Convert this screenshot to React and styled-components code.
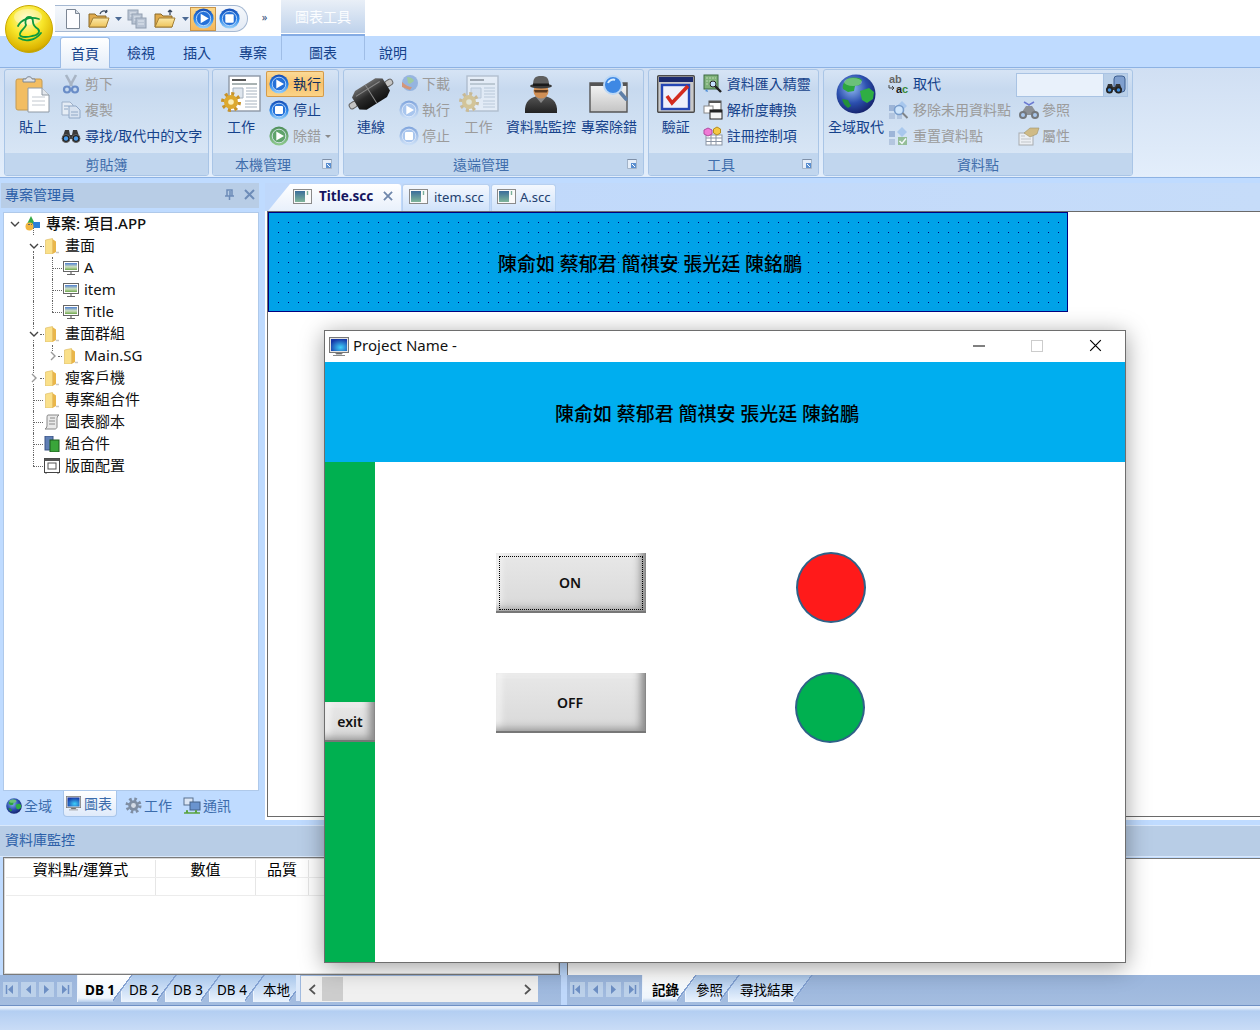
import React from 'react';
import styled, { createGlobalStyle } from 'styled-components';

const Global = createGlobalStyle`
  html, body { margin: 0; padding: 0; background: #fff; }
  * { box-sizing: border-box; }
  body { font-family: "Noto Sans", "Noto Sans CJK TC", sans-serif; }
  svg { display: block; flex: none; }
`;

const Page = styled.div`
  position: relative; width: 1260px; height: 1030px; overflow: hidden;
  display: flex; flex-direction: column; background: #bfdbff;
  font-size: 14px; color: #15428b; line-height: 18px; white-space: nowrap;
`;

/* ---- title ---- */
const TitleBar = styled.div`height: 36px; flex: none; background: #fff; display: flex; padding-left: 55px;`;
const OrbWrap = styled.div`position: absolute; left: 5px; top: 5px; z-index: 3;`;
const Qat = styled.div`
  height: 27px; width: 193px; margin-top: 5px; padding-left: 5px; display: flex; align-items: center;
  background: linear-gradient(#f5f8fc, #e3eaf4); border: 1px solid #a5b8d2; border-left: none; border-radius: 0 14px 14px 0;
`;
const QatSlot = styled.div`
  width: ${p => p.$w}px; height: 24px; display: flex; align-items: center; justify-content: center;
  ${p => p.$on && 'background: linear-gradient(#fbd98c,#f6b658); outline: 1px solid #c9954a; outline-offset: -1px;'}
`;
const QatMore = styled.div`width: 33px; text-align: center; color: #33507a; font-size: 11px; line-height: 34px;`;
const ContextTab = styled.div`
  width: 84px; height: 36px; text-align: center; line-height: 34px; color: #fbfdff;
  background: linear-gradient(#e9eff7, #bdd1eb); border-bottom: 2px solid #85ace4; box-shadow: inset 0 -1px 0 #fff;
`;

const TabStrip = styled.div`height: 31px; flex: none; display: flex; padding-left: 57px; background: #bfdbff; position: relative; z-index: 1;`;
const RibbonTab = styled.div`
  width: ${p => p.$w}px; height: ${p => p.$on ? 31 : 30}px; text-align: center; line-height: 34px; color: #15428b; position: relative;
  ${p => p.$on && `
    margin: 1px 3px 0; width: ${p.$w - 6}px; line-height: 32px; height: 31px;
    background: linear-gradient(#fff, #e3edf9); border: 1px solid #9cbce6; border-bottom: none; border-radius: 3px 3px 0 0;`}
  ${p => p.$ctx && 'border-left: 1px solid #9fbde6; border-right: 1px solid #9fbde6; height: 24px;'}
`;

/* ---- ribbon ---- */
const Ribbon = styled.div`
  height: 111px; flex: none; display: flex; gap: 3px; padding: 1px 0 0 4px;
  background: linear-gradient(#d0dff3, #e3eefb); border-top: 1px solid #8db2e3; border-bottom: 1px solid #8db2e3;
`;
const Group = styled.div`
  position: relative; width: ${p => p.$w}px; height: 107px; margin-right: ${p => p.$mr || 0}px;
  display: flex; flex-direction: column;
  border: 1px solid #a9c5e6; border-radius: 3px; overflow: hidden;
  background: linear-gradient(#d6e4f5, #c7d9ef 18%, #cddef1 40%, #dde9f7);
`;
const GroupBody = styled.div`flex: 1; display: flex; padding-top: 1px; margin-left: -1px;`;
const Caption = styled.div`
  height: 22px; flex: none; background: #c1d6ee; text-align: center; line-height: 24px; color: #3f6dab;
  padding-right: ${p => p.$launch ? 25 : 0}px;
`;
const Launcher = styled.div`position: absolute; right: 6px; bottom: 6px;`;
const Large = styled.div`
  width: ${p => p.$w}px; margin-left: ${p => p.$ml || 0}px; display: flex; flex-direction: column; align-items: center; padding-top: 4px;
  color: ${p => p.$off ? '#9b9b9b' : '#15428b'};
`;
const LargeIcon = styled.div`height: 38px; margin-bottom: 5px; display: flex; align-items: center; justify-content: center;`;
const Col = styled.div`width: ${p => p.$w}px; display: flex; flex-direction: column;`;
const Row = styled.div`
  height: 26px; display: flex; align-items: center; padding-left: ${p => p.$pl || 0}px; gap: ${p => p.$gap}px;
  color: ${p => p.$off ? '#9b9b9b' : '#15428b'};
  ${p => p.$on && 'background: linear-gradient(#fbdc9b, #f8c26c 50%, #fbd58a); box-shadow: inset 0 0 0 1px #d39a4b; border-radius: 2px; color: #10315f;'}
`;
const Ico = styled.div`width: ${p => p.$w}px; display: flex; justify-content: center;`;
const Combo = styled.div`height: 26px; padding: 2px 0 0; display: flex;`;
const ComboInput = styled.div`width: 87px; height: 24px; background: #e9f1fb; border: 1px solid #a9c3e3; border-right: none;`;
const ComboBtn = styled.div`width: 25px; height: 24px; background: #b9cfe8; border: 1px solid #a9c3e3; display: flex; align-items: center; justify-content: center;`;
const Drop = styled.span`width: 0; height: 0; border-left: 3px solid transparent; border-right: 3px solid transparent; border-top: 3px solid #8a8a8a;`;

/* ---- main ---- */
const Main = styled.div`height: 648px; flex: none; display: flex;`;
const Left = styled.div`width: 262px; flex: none; padding-top: 5px; padding-bottom: 6px; display: flex; flex-direction: column;`;
const PaneHead = styled.div`
  height: ${p => p.$h}px; flex: none; background: #b8cde6; color: #2c5fa8; display: flex; align-items: center; padding: 0 ${p => p.$pr || 0}px 2px 4px;
  margin: 0 ${p => p.$mr || 0}px 0 1px; justify-content: space-between;
  ${p => p.$band && 'margin: 0; padding-left: 5px; box-shadow: 0 -1px 0 #d9e8fb, 0 1px 0 #d9e8fb;'}
`;
const PaneBtns = styled.div`display: flex; gap: 9px; align-items: center;`;
const Tree = styled.div`flex: 1; margin: 4px 3px 0 3px; background: #fff; border: 1px solid #afc9ea; color: #111; font-size: 15px;`;
const TreeRow = styled.div`
  position: relative; height: 22px; display: flex; align-items: center; gap: 5px; padding-left: ${p => p.$pl}px;
  font-weight: ${p => p.$strong ? 500 : 400};
`;
const TreeLabel = styled.span`margin-top: -2px;`;
const GuideV = styled.span`
  position: absolute; left: ${p => p.$x}px; top: ${p => p.$top}px; bottom: ${p => p.$bottom}px;
  border-left: 1px dotted #666;
`;
const GuideH = styled.span`
  position: absolute; left: ${p => p.$x}px; top: 11px; width: ${p => p.$w}px; border-top: 1px dotted #666;
`;
const Caret = styled.span`position: absolute; left: ${p => p.$x}px; top: 6px; background: #fff;`;
const PaneTabs = styled.div`height: 29px; flex: none; display: flex; align-items: center; padding-left: 6px; color: #3c6cab;`;
const PaneTab = styled.div`
  width: ${p => p.$w}px; height: 25px; display: flex; align-items: center; gap: ${p => p.$gap || 2}px; padding-left: ${p => p.$pl || 0}px;
  ${p => p.$on && 'background: linear-gradient(#fff, #dfeafa); border: 1px solid #a9c6ea; border-top: none; border-radius: 0 0 4px 4px; margin-top: -3px; height: 26px;'}
`;

const Right = styled.div`flex: 1; display: flex; flex-direction: column; padding-top: 5px; padding-left: 3px; padding-bottom: 6px;`;
const DocTabs = styled.div`height: 28px; flex: none; display: flex; align-items: flex-end; padding-left: 3px; gap: 1px; background: linear-gradient(90deg, #bfd8fb, #c6dcf9);`;
const DocTab = styled.div`
  height: 27px; width: ${p => p.$w}px; display: flex; align-items: center; gap: ${p => p.$gap}px; padding: 0 0 3px ${p => p.$pl}px; font-size: 13px; color: #23406e;
  background: linear-gradient(#f4f8fe, #cfe2fa); border-radius: 3px 3px 0 0; border: 1px solid #b7d0f0; border-bottom: none;
  ${p => p.$on && `
    background: linear-gradient(#fff, #e8f0fb); border: none; font-weight: 700; font-size: 13.5px; color: #14145f;
    clip-path: polygon(0 100%, 22px 0, 100% 0, 100% 100%);`}
`;
const CloseX = styled.span`margin-left: 3px;`;
const DocFrame = styled.div`flex: 1; background: #fff; padding: 0 0 3px 2px;`;
const DocInner = styled.div`height: 100%; background: #fff; border: 1px solid #6a6a6a; border-right: none;`;
const TitleBand = styled.div`
  width: 800px; height: 100px; border: 1px solid #000080; display: flex; align-items: center; justify-content: center;
  padding: 5px 36px 0 0;
  background-color: #00a2e8;
  background-image: conic-gradient(at 1px 1px, transparent 75%, #000070 0);
  background-size: 10px 10px; background-position: 9px 9px;
`;
const Names = styled.div`
  font-family: "Liberation Serif", "Noto Sans CJK TC", serif; font-size: 19px; line-height: 24px; color: #000; font-weight: 500;
`;

/* ---- monitor ---- */
const Monitor = styled.div`height: 149px; flex: none; display: flex; flex-direction: column;`;
const MonBody = styled.div`flex: 1; display: flex; padding-top: 1px;`;
const GridFrame = styled.div`
  width: 557px; margin-left: 3px; background: #fff; border: 1px solid #7a7a7a; outline: 1px solid #d8d8d8; outline-offset: -2px; padding: 2px 2px; color: #000; font-size: 15px;
`;
const GridRow = styled.div`display: flex; height: 18px; border-bottom: 1px solid #ececec;`;
const GridCell = styled.div`width: ${p => p.$w}px; text-align: center; border-right: 1px solid #e6e6e6; line-height: 18px;`;
const Splitter = styled.div`width: 8px; flex: none;`;
const LogPane = styled.div`flex: 1; background: #fff; border-top: 1px solid #777; border-left: 1px solid #777; margin-top: 1px; margin-left: -1px;`;

/* ---- bottom ---- */
const BottomBar = styled.div`height: 30px; flex: none; display: flex; background: linear-gradient(#9ab5dc, #a4bde0); color: #000; font-size: 13.5px;`;
const NavGroup = styled.div`width: ${p => p.$w}px; flex: none; display: flex; align-items: center; gap: 3px; padding-left: 3px; height: 29px;`;
const NavBtn = styled.div`width: 15px; height: 15px; background: #bcd1ea; display: flex; align-items: center; justify-content: center;`;
const Sheets = styled.div`display: flex; width: ${p => p.$w}px; overflow: hidden; height: 27px;`;
const Sheet = styled.div`
  position: relative; z-index: ${p => p.$z};
  width: ${p => p.$w}px; height: 27px; margin-right: -12px; padding-left: ${p => p.$pl || 8}px; line-height: 30px; flex: none;
  background: linear-gradient(#a9c6ea, #cfe1f7 60%, #eaf3fd);
  box-shadow: inset 1px 0 0 #eef5fd;
  clip-path: polygon(0 0, 100% 0, calc(100% - 20px) 100%, 0 100%);
  ${p => p.$on && 'background: linear-gradient(#fff, #eef5fc 85%, #b5cdec); font-weight: 700;'}
  &::after {
    content: ""; position: absolute; right: 0; top: 0; width: 20px; height: 27px;
    background: linear-gradient(to bottom right, transparent calc(50% - 1.5px), #7f9ed0 calc(50% - 1.5px), #7f9ed0 50%, transparent 50%);
  }
`;
const SheetSep = styled.div`width: 4px; height: 26px; background: #dbe8fa; margin-right: 1px; flex: none;`;
const HScroll = styled.div`width: 237px; height: 26px; margin-top: 1px; background: #f0f0f0; display: flex; align-items: center; justify-content: space-between; padding: 0 6px 0 7px; flex: none; position: relative;`;
const Thumb = styled.div`position: absolute; left: 21px; top: 1px; width: 21px; height: 24px; background: #cdcdcd;`;
const BarFill = styled.div`width: ${p => p.$w}px; flex: none;`;
const BarSplit = styled.div`width: 6px; flex: none; background: #bfd8fb;`;
const Status = styled.div`
  height: 25px; flex: none; border-top: 1px solid #6f90c4;
  background: linear-gradient(#e4eefb, #e4eefb 2px, #b3cef2 5px, #c9dcf6);
`;

/* ---- window ---- */
const Win = styled.div`
  position: absolute; left: 324px; top: 330px; width: 802px; height: 633px; z-index: 5;
  background: #fff; border: 1px solid #6e6e6e; box-shadow: 0 4px 22px rgba(0,0,0,.38);
  display: flex; flex-direction: column;
`;
const WinTitle = styled.div`height: 31px; flex: none; display: flex; align-items: center; padding: 0 1px 0 4px; color: #111; font-size: 15px;`;
const WinName = styled.div`margin: -4px 0 0 4px; flex: 1;`;
const WinBtn = styled.div`width: 58px; display: flex; justify-content: center; margin-top: -2px;`;
const WinBand = styled.div`height: 100px; flex: none; background: #00aeef; display: flex; align-items: center; justify-content: center; padding: 5px 36px 0 0;`;
const WinBody = styled.div`flex: 1; display: flex;`;
const WinSide = styled.div`width: 50px; flex: none; background: #00b050; padding-top: 240px;`;
const Canvas = styled.div`flex: 1; position: relative; background: #fff;`;
const Bevel = styled.div`
  display: flex; align-items: center; justify-content: center; color: #111; font-weight: 600; font-size: 14px;
  background: linear-gradient(#e8e8e8, #d8d8d8);
  box-shadow: inset 0 -2px 0 #777, inset -1px 0 0 #888, inset 0 -9px 8px -5px #8f8f8f, inset -11px 0 9px -6px #858585, inset 9px 0 8px -6px #fff, inset 0 5px 5px -3px #f4f4f4;
  ${p => p.$focus && 'outline: 1px dotted #000; outline-offset: -4px;'}
`;
const CanvasBtn = styled(Bevel)`position: absolute; left: ${p => p.$x}px; top: ${p => p.$y}px; width: 150px; height: 60px; padding-right: 2px;`;
const ExitBtn = styled(Bevel)`width: 50px; height: 40px;`;
const Lamp = styled.div`
  position: absolute; left: ${p => p.$x}px; top: ${p => p.$y}px; width: 70px; height: 71px; border-radius: 50%;
  background: ${p => p.$c}; border: 2px solid #2f6188;
`;

/* ---- drawings ---- */
const Defs = () => (
  <svg width="0" height="0" style={{ position: 'absolute' }}>
    <defs>
      <radialGradient id="orb" cx="45%" cy="30%" r="75%"><stop offset="0" stopColor="#fffbc0" /><stop offset=".45" stopColor="#f8e62a" /><stop offset=".85" stopColor="#dcb400" /><stop offset="1" stopColor="#a88a00" /></radialGradient>
      <linearGradient id="rimB" x1="0" y1="0" x2="0" y2="1"><stop offset="0" stopColor="#164cb4" /><stop offset=".55" stopColor="#2a86ea" /><stop offset="1" stopColor="#9fd4fa" /></linearGradient>
      <linearGradient id="rimG" x1="0" y1="0" x2="0" y2="1"><stop offset="0" stopColor="#4e8f5a" /><stop offset="1" stopColor="#8fcb8f" /></linearGradient>
      <linearGradient id="rimL" x1="0" y1="0" x2="0" y2="1"><stop offset="0" stopColor="#7fa4dc" /><stop offset="1" stopColor="#cfe2f8" /></linearGradient>
      <linearGradient id="screen" x1="0" y1="0" x2="0" y2="1"><stop offset="0" stopColor="#4f7fd0" /><stop offset=".55" stopColor="#cfe0c0" /><stop offset="1" stopColor="#6fa84e" /></linearGradient>
      <radialGradient id="screenB" cx="60%" cy="70%" r="70%"><stop offset="0" stopColor="#3fd0fa" /><stop offset="1" stopColor="#1638a8" /></radialGradient>
      <linearGradient id="tabDoc" x1="0" y1="0" x2="0" y2="1"><stop offset="0" stopColor="#3b6d9a" /><stop offset="1" stopColor="#7fb59a" /></linearGradient>
      <linearGradient id="folderF" x1="0" y1="0" x2="0" y2="1"><stop offset="0" stopColor="#fbe9a8" /><stop offset="1" stopColor="#eec35a" /></linearGradient>
      <radialGradient id="globe" cx="40%" cy="35%" r="70%"><stop offset="0" stopColor="#8fb8ef" /><stop offset=".55" stopColor="#2b4fae" /><stop offset="1" stopColor="#141f66" /></radialGradient>
      <linearGradient id="winG" x1="0" y1="0" x2="0" y2="1"><stop offset="0" stopColor="#f7f7f7" /><stop offset="1" stopColor="#c4c4c4" /></linearGradient>
      <linearGradient id="plug" x1="0" y1="0" x2="0" y2="1"><stop offset="0" stopColor="#6a6a6a" /><stop offset=".5" stopColor="#2a2a2a" /><stop offset="1" stopColor="#111" /></linearGradient>
      <linearGradient id="coat" x1="0" y1="0" x2="0" y2="1"><stop offset="0" stopColor="#555" /><stop offset="1" stopColor="#222" /></linearGradient>
    </defs>
  </svg>
);

const Orb = () => (
  <svg width="48" height="48" viewBox="0 0 48 48">
    <circle cx="24" cy="24" r="23.500" fill="url(#orb)" stroke="#c8a800" />
    <ellipse cx="23" cy="12" rx="14" ry="8" fill="#fff" opacity=".35" />
    <g fill="none" stroke="#0c9a3e" strokeWidth="1.800" strokeLinecap="round">
      <path d="M24 12c-4 0-4 6-3 8-1 4-7 6-6 10 1 3 9 2 12 1 5 0 9-4 6-7-3-2-5-4-5-7 0-3-1-5-4-5z" />
      <path d="M13 21c3-6 11-10 21-7" />
      <path d="M14 33c6 4 16 3 22-5" />
    </g>
  </svg>
);

const Ball = ({ s = 20, kind = 'play', tone = 'B' }) => (
  <svg width={s} height={s} viewBox="0 0 20 20">
    <circle cx="10" cy="10" r="9.600" fill={`url(#rim${tone})`} />
    <circle cx="10" cy="10" r="6.800" fill={tone === 'L' ? '#a9c6ee' : tone === 'G' ? '#5fa36a' : '#2470d8'} stroke={tone === 'B' ? '#cfe6ff' : '#e4eefb'} strokeWidth=".8" />
    {kind === 'play'
      ? <path d="M7.300 5.400 15 10l-7.700 4.600z" fill="#fff" />
      : <rect x="6" y="6" width="8" height="8" rx="1" fill="#fff" />}
  </svg>
);

const NewDoc = () => (
  <svg width="16" height="20" viewBox="0 0 16 20"><path d="M1.500.5h9l4 4v15h-13z" fill="#fdfdff" stroke="#7c8694" /><path d="M10.500.5v4h4" fill="#d7dde6" stroke="#7c8694" /></svg>
);
const Folder = ({ arrow = 'open', w = 22 }) => (
  <svg width={w} height="20" viewBox="0 0 22 20">
    <path d="M1 5h6l2 2h9v11H1z" fill="#e0ab4d" stroke="#8a6a2a" />
    <path d="M1 18 5 9h16l-3 9z" fill="url(#folderF)" stroke="#a27f36" />
    {arrow === 'open' && <path d="M12 5c1-3 4-4 7-2m0 0-.5-2m.5 2-2 .5" fill="none" stroke="#3a4a60" strokeWidth="1.300" />}
    {arrow === 'save' && <path d="M16 6V1m0 0-2 2m2-2 2 2" fill="none" stroke="#3a4a60" strokeWidth="1.300" />}
  </svg>
);
const Pages = ({ s = 20 }) => (
  <svg width={s} height={s} viewBox="0 0 20 20" opacity=".75">
    {[[1, 1], [5, 5], [9, 9]].map(([x, y]) => (
      <g key={x}><rect x={x} y={y} width="10" height="10" fill="#a9b6c8" stroke="#76869c" /><path d={`M${x + 2} ${y + 3}h6M${x + 2} ${y + 6}h6`} stroke="#dfe6ef" /></g>
    ))}
  </svg>
);
const DropTri = ({ c = '#4c6a94' }) => <svg width="7" height="4" viewBox="0 0 7 4"><path d="M0 0h7L3.500 4z" fill={c} /></svg>;

const Paste = () => (
  <svg width="36" height="38" viewBox="0 0 36 38">
    <rect x="1" y="4" width="26" height="31" rx="2" fill="#f2bd62" stroke="#c49a52" />
    <path d="M8 4h3c0-3 6-3 6 0h3v3H8z" fill="#dfe3ea" stroke="#7d8794" />
    <path d="M13 13h14l7 7v17H13z" fill="#fff" stroke="#8e98a3" />
    <path d="M27 13v7h7" fill="#e3e7ec" stroke="#8e98a3" />
    <path d="M17 22h13M17 26h13M17 30h13" stroke="#c2c8cf" />
  </svg>
);
const Scissors = () => (
  <svg width="18" height="20" viewBox="0 0 18 20" opacity=".85">
    <path d="M4 1l6 11M14 1 8 12" stroke="#a2adbc" strokeWidth="2.600" />
    <circle cx="5" cy="15.500" r="3" fill="none" stroke="#5a7fc0" strokeWidth="2.200" />
    <circle cx="13" cy="15.500" r="3" fill="none" stroke="#5a7fc0" strokeWidth="2.200" />
  </svg>
);
const CopyIc = () => (
  <svg width="20" height="18" viewBox="0 0 20 18" opacity=".75">
    <path d="M1 1h8l3 3v10H1z" fill="#eef2f7" stroke="#8ea2bd" />
    <path d="M8 5h7l4 4v8H8z" fill="#dbe4f0" stroke="#7d96b8" />
    <path d="M3 5h5M3 8h4M10 11h7M10 14h7" stroke="#7d96b8" />
  </svg>
);
const Binoc = ({ s = 20 }) => (
  <svg width={s} height={s * .7} viewBox="0 0 20 14">
    <path d="M4 1h4l1 5h2l1-5h4l3 9H1z" fill="#3a3a3a" />
    <circle cx="5" cy="9.500" r="4" fill="#1d1d1d" stroke="#666" /><circle cx="15" cy="9.500" r="4" fill="#1d1d1d" stroke="#666" />
    <circle cx="5" cy="9.500" r="2.200" fill="#4a9ae8" /><circle cx="15" cy="9.500" r="2.200" fill="#4a9ae8" />
  </svg>
);
const Gear = ({ s = 18, c = '#d8a93a', hole = '#f5df96' }) => (
  <svg width={s} height={s} viewBox="0 0 18 18">
    <circle cx="9" cy="9" r="6.700" fill="none" stroke={c} strokeWidth="3.600" strokeDasharray="2.600 2.660" />
    <circle cx="9" cy="9" r="5.500" fill={c} />
    <circle cx="9" cy="9" r="2.600" fill={hole} />
  </svg>
);
const WorkDoc = ({ dim }) => (
  <svg width="40" height="38" viewBox="0 0 40 38" opacity={dim ? .45 : 1}>
    <rect x="8" y="1" width="31" height="35" fill="#fff" stroke="#8d98a6" strokeWidth="1.400" />
    <path d="M11 5h14" stroke="#222" strokeWidth="1.400" /><path d="M11 9h25" stroke="#566" />
    <path d="M12 13h10v10H12zM25 13h11M25 16h11M25 19h11M25 22h11M24 26h12M24 29h12M24 32h12" fill="#dfe6ee" stroke="#a6b2bf" />
    <g transform="translate(0 17)">
      <circle cx="10" cy="10" r="8.200" fill="none" stroke="#c8932a" strokeWidth="3.600" strokeDasharray="3 3.430" />
      <circle cx="10" cy="10" r="7" fill="#dda92f" /><circle cx="10" cy="10" r="2.800" fill="#fbeeb6" />
    </g>
  </svg>
);
const Plug = () => (
  <svg width="42" height="38" viewBox="0 0 42 38" style={{ overflow: 'visible' }}>
    <g transform="rotate(-32 21 19)">
      <rect x="-4" y="16" width="8" height="6" rx="2.500" fill="#c4c4c4" stroke="#666" />
      <rect x="38" y="16" width="8" height="6" rx="2.500" fill="#c4c4c4" stroke="#666" />
      <path d="M3 12 9 8h24l6 4v14l-6 4H9l-6-4z" fill="url(#plug)" />
      <path d="M21 8v22" stroke="#8a8a8a" /><path d="M7 13h28" stroke="#888" />
    </g>
  </svg>
);
const DownGlobe = () => (
  <svg width="20" height="20" viewBox="0 0 20 20" opacity=".7">
    <circle cx="11" cy="9" r="8" fill="#7fa4d8" /><path d="M8 3c3 0 6 1 7 4-2 1-3 4-6 2z" fill="#8cc47a" />
    <path d="M3 8c3 3 7 5 10 5l-2 3-8-3z" fill="#d97a48" />
  </svg>
);
const Spy = () => (
  <svg width="34" height="38" viewBox="0 0 34 38">
    <path d="M1 38c-1-12 6-17 16-17s17 5 16 17z" fill="url(#coat)" />
    <path d="M11 21l6 7 6-7z" fill="#888" />
    <ellipse cx="17" cy="16" rx="7.500" ry="7.500" fill="#d08f55" />
    <path d="M10 15h14l-1 2.500H11z" fill="#5b3a20" />
    <ellipse cx="17" cy="11" rx="11" ry="2.600" fill="#3a3a3a" />
    <path d="M9 11c0-8 2-10 8-10s8 2 8 10z" fill="#5f5f5f" /><path d="M9 8.500h16V11H9z" fill="#1b1b1b" />
  </svg>
);
const DebugWin = () => (
  <svg width="42" height="38" viewBox="0 0 42 38">
    <path d="M2 8h37v29H2z" fill="url(#winG)" stroke="#555" strokeWidth="1.400" />
    <rect x="2" y="8" width="37" height="3" fill="#555" />
    <path d="M31 16l7 8" stroke="#5e7fa8" strokeWidth="3.600" strokeLinecap="round" />
    <circle cx="25" cy="10" r="9" fill="#3e88e4" stroke="#bcd8f6" strokeWidth="2" />
    <path d="M20 8c1-3 5-4 7-3" fill="none" stroke="#d6ecff" strokeWidth="2" />
  </svg>
);
const Verify = () => (
  <svg width="38" height="38" viewBox="0 0 38 38">
    <rect x=".7" y=".7" width="36.600" height="36.600" rx="1" fill="#c9c9c9" stroke="#4b4b4b" strokeWidth="1.400" />
    <rect x="2" y="2" width="34" height="5" fill="#1b2a6e" />
    <rect x="5" y="10" width="27" height="24" fill="#eef0fb" stroke="#2546b5" strokeWidth="2.400" />
    <path d="M10 21l5 7L31 11" fill="none" stroke="#d32b1f" strokeWidth="3.600" />
  </svg>
);
const Wizard = () => (
  <svg width="20" height="20" viewBox="0 0 20 20">
    <rect x="1" y="1" width="14" height="14" fill="#7fb27a" stroke="#3d6a42" /><path d="M3 4h10M3 7h10M3 10h10" stroke="#bcd8b5" strokeDasharray="2 1" />
    <path d="M11 11l7 7" stroke="#222" strokeWidth="2.400" /><circle cx="10" cy="10" r="3" fill="#c6e0ff" stroke="#222" />
    <path d="M2 17l2-2 1 3" fill="#4a8bd8" />
  </svg>
);
const Resol = () => (
  <svg width="20" height="20" viewBox="0 0 20 20">
    <rect x="6" y="1" width="12" height="9" fill="#fff" stroke="#555" /><rect x="6" y="1" width="12" height="2" fill="#555" />
    <rect x="1" y="6" width="9" height="7" fill="#fff" stroke="#888" />
    <rect x="7" y="10" width="12" height="9" fill="#f4f4f4" stroke="#222" /><rect x="7" y="10" width="12" height="2.500" fill="#222" />
  </svg>
);
const Reg = () => (
  <svg width="20" height="20" viewBox="0 0 20 20">
    <rect x="3" y="9" width="16" height="10" fill="#fff" stroke="#8b95a5" /><path d="M3 12h16M3 15.500h16M8 9v10M13 9v10" stroke="#8b95a5" />
    <path d="M5 2l4 2v4l-4 2-4-2V4z" fill="#f07ad6" stroke="#b24aa0" /><path d="M14 1l3.500 2v4L14 9l-3.500-2V3z" fill="#f5c842" stroke="#b68c1c" />
  </svg>
);
const Globe = ({ s = 40 }) => (
  <svg width={s} height={s} viewBox="0 0 40 40">
    <circle cx="20" cy="20" r="19.500" fill="url(#globe)" />
    <path d="M11 5c5-2 12-2 15 1l-2 5-5 1-1 5-6 1-5-3c-1-4 1-7 4-10z" fill="#2ca63e" />
    <path d="M24 17l9-3 5 4-1 7-6 4-5-3z" fill="#2fae43" />
    <path d="M6 25l6 1 3 6-3 2c-3-2-5-5-6-9z" fill="#23903a" />
    <ellipse cx="17" cy="8" rx="9" ry="4" fill="#fff" opacity=".3" />
  </svg>
);
const AbcIc = () => (
  <svg width="22" height="20" viewBox="0 0 22 20" style={{ fontFamily: 'Liberation Sans, sans-serif', fontWeight: 700 }}>
    <text x="1" y="8.500" fontSize="11" fill="#666">ab</text>
    <text x="8" y="19" fontSize="11" fill="#222">a</text>
    <text x="14" y="19" fontSize="11" fill="#3a8a3a">c</text>
    <path d="M1 11v3h5m-2-2 2 2-2 2" fill="none" stroke="#444" />
  </svg>
);
const RemoveIc = () => (
  <svg width="22" height="20" viewBox="0 0 22 20" opacity=".75">
    <rect x="1" y="5" width="6" height="6" fill="#8ca7cf" /><rect x="1" y="13" width="6" height="6" fill="#a9bdd9" /><rect x="9" y="13" width="5" height="6" fill="#a9bdd9" />
    <path d="M14 1l5 5-5 5-5-5z" fill="#9cc0ec" />
    <circle cx="11" cy="10" r="4.500" fill="#cfe8ff" stroke="#5c87bf" strokeWidth="1.600" /><path d="M14.500 13l5 5" stroke="#666" strokeWidth="2" />
  </svg>
);
const ResetIc = () => (
  <svg width="22" height="20" viewBox="0 0 22 20" opacity=".75">
    <rect x="1" y="5" width="6" height="6" fill="#8ca7cf" /><rect x="1" y="13" width="6" height="6" fill="#a9bdd9" />
    <path d="M14 1l5 5-5 5-5-5z" fill="#9cc0ec" />
    <rect x="10" y="11" width="9" height="8" fill="#7fb27a" /><path d="M11.500 15l2.500 2.500 4-5" fill="none" stroke="#fff" strokeWidth="1.500" />
  </svg>
);
const RefIc = () => (
  <svg width="22" height="20" viewBox="0 0 22 20" opacity=".75">
    <path d="M6 2l5 3 5-3M11 5v2" fill="none" stroke="#4c5ac8" strokeWidth="1.500" />
    <path d="M8 6h6l6 9H2z" fill="#777" />
    <circle cx="5" cy="15" r="4" fill="#555" /><circle cx="17" cy="15" r="4" fill="#555" />
    <circle cx="5" cy="15" r="2" fill="#9cc0ec" /><circle cx="17" cy="15" r="2" fill="#9cc0ec" />
  </svg>
);
const PropIc = () => (
  <svg width="22" height="20" viewBox="0 0 22 20" opacity=".75">
    <rect x="1" y="7" width="14" height="12" fill="#f4f4f4" stroke="#999" /><path d="M3 10h4M3 13h10M3 16h10" stroke="#bbb" />
    <path d="M6 7 12 2l9 0-2 6-7 3z" fill="#cfae62" stroke="#8f7a3e" strokeWidth=".6" />
  </svg>
);
const ComboIc = () => (
  <svg width="21" height="20" viewBox="0 0 21 20">
    <rect x="9" y="1" width="11" height="16" rx="3" fill="#7f9fce" stroke="#3e5f90" />
    <path d="M3 9h4l1 3h2l1-3h4l2 6H1z" fill="#333" />
    <circle cx="4.500" cy="15" r="3.500" fill="#222" /><circle cx="13.500" cy="15" r="3.500" fill="#222" />
    <circle cx="4.500" cy="15" r="1.800" fill="#3f8fe0" /><circle cx="13.500" cy="15" r="1.800" fill="#3f8fe0" />
  </svg>
);
const LauncherIc = () => (
  <svg width="10" height="10" viewBox="0 0 10 10">
    <path d="M.5.500h9v9h-9z" fill="#e6eef8" stroke="#a3b4c9" /><path d="M.5.500h9" stroke="#7f90a8" />
    <path d="M4 4h5v5H4z" fill="#5a8fd0" /><path d="M5 5l3 3" stroke="#fff" />
  </svg>
);
const PinIc = () => <svg width="11" height="12" viewBox="0 0 11 12"><path d="M3 1h5v6H3zM1 7h9M5.500 7v4M6 2v5" fill="none" stroke="#6d8cb8" strokeWidth="1.500" /></svg>;
const XIc = ({ s = 11, c = '#6d8cb8', w = 2 }) => <svg width={s} height={s} viewBox="0 0 11 11"><path d="M1 1l9 9M10 1l-9 9" stroke={c} strokeWidth={w} /></svg>;

const CaretIc = ({ dir, c = '#444' }) => (
  <svg width="10" height="10" viewBox="0 0 10 10">
    <path d={dir === 'down' ? 'M1 3l4 4 4-4' : 'M3 1l4 4-4 4'} fill="none" stroke={c} strokeWidth="1.400" />
  </svg>
);
const TProject = () => (
  <svg width="16" height="16" viewBox="0 0 16 16">
    <path d="M6 0l4 8H2z" fill="#35a845" /><rect x="8" y="6" width="7" height="6" fill="#2a7fd8" /><circle cx="4.500" cy="10.500" r="4" fill="#f2b640" />
  </svg>
);
const TFolder = () => (
  <svg width="16" height="16" viewBox="0 0 16 16">
    <path d="M1.500 2l7-1.500V16h-7z" fill="#fae08a" stroke="#dcb95c" strokeWidth=".6" />
    <path d="M8.500 1l3.500 2.500V14l-3.500 2z" fill="#e9b64a" />
    <path d="M12 14.500h3" stroke="#c8c8c8" strokeWidth="1.500" />
  </svg>
);
const TScreen = () => (
  <svg width="16" height="16" viewBox="0 0 16 16">
    <rect x=".5" y="1.500" width="15" height="10" fill="#fff" stroke="#666" />
    <rect x="2" y="3" width="12" height="7" fill="url(#screen)" />
    <path d="M8 12v2M4 14.500h8" stroke="#666" strokeWidth="1.200" />
  </svg>
);
const TScript = () => (
  <svg width="16" height="16" viewBox="0 0 16 16">
    <path d="M4 1h11c-2 1-2 3-2 5v7c0 1-1 2-2 2H1c2-1 2-3 2-4V4c0-1 0-3 1-3z" fill="#e9e9e9" stroke="#888" />
    <path d="M6 4h5M5 7h6M5 10h6" stroke="#888" />
  </svg>
);
const TParts = () => (
  <svg width="16" height="16" viewBox="0 0 16 16">
    <rect x="1" y="0" width="8" height="14" fill="#5f7fb5" stroke="#3c5585" /><rect x="6" y="4" width="9" height="12" fill="#3aa53a" stroke="#1d5a1d" />
  </svg>
);
const TLayout = () => (
  <svg width="16" height="16" viewBox="0 0 16 16">
    <rect x=".5" y=".5" width="15" height="14" fill="#fff" stroke="#444" /><rect x=".5" y=".5" width="15" height="2.500" fill="#555" />
    <rect x="4" y="5" width="8" height="6" fill="#fff" stroke="#555" /><path d="M2 15v1M14 15v1" stroke="#666" />
  </svg>
);
const TabDoc = () => (
  <svg width="19" height="15" viewBox="0 0 19 15">
    <rect x=".5" y=".5" width="18" height="14" fill="#fafafa" stroke="#8a8a8a" />
    <rect x="2" y="2" width="10" height="11" fill="url(#tabDoc)" />
    <path d="M14.500 2v4" stroke="#7ab09a" strokeWidth="1.400" />
  </svg>
);
const WinIc = ({ s = 20 }) => (
  <svg width={s} height={s} viewBox="0 0 20 20">
    <rect x=".5" y=".5" width="19" height="15" fill="#e4e4e4" stroke="#777" />
    <rect x="2" y="2" width="16" height="12" fill="url(#screenB)" />
    <path d="M7 16h6v1H7zM4 18.500h12" stroke="#888" />
  </svg>
);
const NetIc = () => (
  <svg width="18" height="17" viewBox="0 0 18 17">
    <rect x="1" y="1" width="9" height="7" fill="#dce6f4" stroke="#58708f" /><rect x="7" y="5" width="10" height="8" fill="#6a94cf" stroke="#44628a" />
    <path d="M1 16h16" stroke="#5aa33f" strokeWidth="1.500" /><path d="M3 16l1-3 1 3M12 16l1-3 1 3" fill="#5aa33f" stroke="#5aa33f" />
  </svg>
);
const NavIc = ({ kind, c = '#6d8fc4' }) => {
  const d = { first: 'M10 3v9L5 7.500z', prev: 'M10 3v9L5 7.500z', next: 'M5 3v9l5-4.500z', last: 'M5 3v9l5-4.500z' }[kind];
  return (
    <svg width="15" height="15" viewBox="0 0 15 15">
      <path d={d} fill={c} />
      {kind === 'first' && <path d="M3.500 3v9" stroke={c} strokeWidth="1.500" />}
      {kind === 'last' && <path d="M11.500 3v9" stroke={c} strokeWidth="1.500" />}
    </svg>
  );
};
const Chev = ({ dir }) => (
  <svg width="9" height="11" viewBox="0 0 9 11"><path d={dir === 'l' ? 'M7 1 2 5.500 7 10' : 'M2 1l5 4.500L2 10'} fill="none" stroke="#555" strokeWidth="1.700" /></svg>
);

const NAMES = '陳俞如 蔡郁君 簡祺安 張光廷 陳銘鵬';

const TREE = [
  { label: '專案: 項目.APP', pl: 21, Icon: TProject, strong: true, caret: [6, 'down'], v: [[29, 15, 0]], h: [[24, 4]] },
  { label: '畫面', pl: 40, Icon: TFolder, caret: [25, 'down'], v: [[29, 16, 0]], h: [[36, 4]] },
  { label: 'A', pl: 59, Icon: TScreen, v: [[29, 0, 0], [48, 0, 0]], h: [[48, 10]] },
  { label: 'item', pl: 59, Icon: TScreen, v: [[29, 0, 0], [48, 0, 0]], h: [[48, 10]] },
  { label: 'Title', pl: 59, Icon: TScreen, v: [[29, 0, 0], [48, 0, 11]], h: [[48, 10]] },
  { label: '畫面群組', pl: 40, Icon: TFolder, caret: [25, 'down'], v: [[29, 0, 0]], h: [[36, 4]] },
  { label: 'Main.SG', pl: 59, Icon: TFolder, caret: [44, 'right', '#999'], v: [[29, 0, 0], [48, 0, 16]], h: [[54, 4]] },
  { label: '瘦客戶機', pl: 40, Icon: TFolder, caret: [25, 'right', '#999'], v: [[29, 0, 0]], h: [[36, 4]] },
  { label: '專案組合件', pl: 40, Icon: TFolder, v: [[29, 0, 0]], h: [[29, 10]] },
  { label: '圖表腳本', pl: 40, Icon: TScript, v: [[29, 0, 0]], h: [[29, 10]] },
  { label: '組合件', pl: 40, Icon: TParts, v: [[29, 0, 0]], h: [[29, 10]] },
  { label: '版面配置', pl: 40, Icon: TLayout, v: [[29, 0, 11]], h: [[29, 10]] },
];

const SmallRow = ({ icon, w, gap, pl, off, on, children, extra }) => (
  <Row $gap={gap} $pl={pl} $off={off} $on={on}>
    <Ico $w={w}>{icon}</Ico>
    <span>{children}</span>
    {extra}
  </Row>
);

const Nav = ({ w }) => (
  <NavGroup $w={w}>
    {['first', 'prev', 'next', 'last'].map(k => <NavBtn key={k}><NavIc kind={k} /></NavBtn>)}
  </NavGroup>
);

export default function App() {
  return (
    <Page>
      <Global />
      <Defs />
      <OrbWrap><Orb /></OrbWrap>

      <TitleBar>
        <Qat>
          <QatSlot $w={26}><NewDoc /></QatSlot>
          <QatSlot $w={26}><Folder /></QatSlot>
          <QatSlot $w={12}><DropTri /></QatSlot>
          <QatSlot $w={26}><Pages /></QatSlot>
          <QatSlot $w={30}><Folder arrow="save" /></QatSlot>
          <QatSlot $w={10}><DropTri /></QatSlot>
          <QatSlot $w={26} $on><Ball s={21} /></QatSlot>
          <QatSlot $w={26}><Ball s={21} kind="stop" /></QatSlot>
        </Qat>
        <QatMore>»</QatMore>
        <ContextTab>圖表工具</ContextTab>
      </TitleBar>

      <TabStrip>
        <RibbonTab $w={56} $on>首頁</RibbonTab>
        <RibbonTab $w={56}>檢視</RibbonTab>
        <RibbonTab $w={56}>插入</RibbonTab>
        <RibbonTab $w={56}>專案</RibbonTab>
        <RibbonTab $w={84} $ctx>圖表</RibbonTab>
        <RibbonTab $w={56}>說明</RibbonTab>
      </TabStrip>

      <Ribbon>
        <Group $w={205}>
          <GroupBody>
            <Large $w={58}><LargeIcon><Paste /></LargeIcon>貼上</Large>
            <Col $w={146}>
              <SmallRow icon={<Scissors />} w={18} gap={5} off>剪下</SmallRow>
              <SmallRow icon={<CopyIc />} w={18} gap={5} off>複製</SmallRow>
              <SmallRow icon={<Binoc />} w={18} gap={5}>尋找/取代中的文字</SmallRow>
            </Col>
          </GroupBody>
          <Caption>剪貼簿</Caption>
        </Group>

        <Group $w={127} $mr={1}>
          <GroupBody>
            <Large $w={50} $ml={4}><LargeIcon><WorkDoc /></LargeIcon>工作</Large>
            <Col $w={58}>
              <SmallRow icon={<Ball />} w={20} gap={4} pl={3} on>執行</SmallRow>
              <SmallRow icon={<Ball kind="stop" />} w={20} gap={4} pl={3}>停止</SmallRow>
              <SmallRow icon={<Ball tone="G" />} w={20} gap={4} pl={3} off extra={<Drop />}>除錯</SmallRow>
            </Col>
          </GroupBody>
          <Caption $launch>本機管理</Caption>
          <Launcher><LauncherIc /></Launcher>
        </Group>

        <Group $w={301} $mr={1}>
          <GroupBody>
            <Large $w={56}><LargeIcon><Plug /></LargeIcon>連線</Large>
            <Col $w={52}>
              <SmallRow icon={<DownGlobe />} w={20} gap={3} off>下載</SmallRow>
              <SmallRow icon={<Ball tone="L" />} w={20} gap={3} off>執行</SmallRow>
              <SmallRow icon={<Ball tone="L" kind="stop" />} w={20} gap={3} off>停止</SmallRow>
            </Col>
            <Large $w={55} $off><LargeIcon><WorkDoc dim /></LargeIcon>工作</Large>
            <Large $w={70}><LargeIcon><Spy /></LargeIcon>資料點監控</Large>
            <Large $w={66}><LargeIcon><DebugWin /></LargeIcon>專案除錯</Large>
          </GroupBody>
          <Caption $launch>遠端管理</Caption>
          <Launcher><LauncherIc /></Launcher>
        </Group>

        <Group $w={171} $mr={1}>
          <GroupBody>
            <Large $w={56}><LargeIcon><Verify /></LargeIcon>驗証</Large>
            <Col $w={115}>
              <SmallRow icon={<Wizard />} w={18} gap={5}>資料匯入精靈</SmallRow>
              <SmallRow icon={<Resol />} w={18} gap={5}>解析度轉換</SmallRow>
              <SmallRow icon={<Reg />} w={18} gap={5}>註冊控制項</SmallRow>
            </Col>
          </GroupBody>
          <Caption $launch>工具</Caption>
          <Launcher><LauncherIc /></Launcher>
        </Group>

        <Group $w={310}>
          <GroupBody>
            <Large $w={66}><LargeIcon><Globe /></LargeIcon>全域取代</Large>
            <Col $w={127}>
              <SmallRow icon={<AbcIc />} w={20} gap={4}>取代</SmallRow>
              <SmallRow icon={<RemoveIc />} w={20} gap={4} off>移除未用資料點</SmallRow>
              <SmallRow icon={<ResetIc />} w={20} gap={4} off>重置資料點</SmallRow>
            </Col>
            <Col $w={112}>
              <Combo><ComboInput /><ComboBtn><ComboIc /></ComboBtn></Combo>
              <SmallRow icon={<RefIc />} w={22} gap={2} pl={2} off>參照</SmallRow>
              <SmallRow icon={<PropIc />} w={22} gap={2} pl={2} off>屬性</SmallRow>
            </Col>
          </GroupBody>
          <Caption>資料點</Caption>
        </Group>
      </Ribbon>

      <Main>
        <Left>
          <PaneHead $h={25} $pr={4} $mr={3}>
            專案管理員
            <PaneBtns><PinIc /><XIc /></PaneBtns>
          </PaneHead>
          <Tree>
            {TREE.map(t => (
              <TreeRow key={t.label} $pl={t.pl} $strong={t.strong}>
                {t.v.map(([x, top, bottom]) => <GuideV key={x} $x={x} $top={top} $bottom={bottom} />)}
                {t.h.map(([x, w]) => <GuideH key={x} $x={x} $w={w} />)}
                {t.caret && <Caret $x={t.caret[0]}><CaretIc dir={t.caret[1]} c={t.caret[2]} /></Caret>}
                <t.Icon />
                <TreeLabel>{t.label}</TreeLabel>
              </TreeRow>
            ))}
          </Tree>
          <PaneTabs>
            <PaneTab $w={57}><Globe s={16} />全域</PaneTab>
            <PaneTab $w={54} $on $pl={2} $gap={3}><WinIc s={15} />圖表</PaneTab>
            <PaneTab $w={60} $pl={8}><Gear s={17} c="#7f8ea3" hole="#d5dce6" />工作</PaneTab>
            <PaneTab $w={56} $pl={6}><NetIc />通訊</PaneTab>
          </PaneTabs>
        </Left>
        <Right>
          <DocTabs>
            <DocTab $on $w={133} $pl={25} $gap={7}><TabDoc />Title.scc<CloseX><XIc s={10} c="#6f87ab" /></CloseX></DocTab>
            <DocTab $w={88} $pl={6} $gap={6}><TabDoc />item.scc</DocTab>
            <DocTab $w={65} $pl={5} $gap={4}><TabDoc />A.scc</DocTab>
          </DocTabs>
          <DocFrame>
            <DocInner>
              <TitleBand><Names>{NAMES}</Names></TitleBand>
            </DocInner>
          </DocFrame>
        </Right>
      </Main>

      <Monitor>
        <PaneHead $h={30} $band>資料庫監控</PaneHead>
        <MonBody>
          <GridFrame>
            <GridRow>
              <GridCell $w={150}>資料點/運算式</GridCell>
              <GridCell $w={100}>數值</GridCell>
              <GridCell $w={53}>品質</GridCell>
            </GridRow>
            <GridRow>
              <GridCell $w={150} />
              <GridCell $w={100} />
              <GridCell $w={53} />
            </GridRow>
          </GridFrame>
          <Splitter />
          <LogPane />
        </MonBody>
      </Monitor>

      <BottomBar>
        <Nav w={77} />
        <Sheets $w={219}>
          <Sheet $z={5} $on $w={56}>DB 1</Sheet>
          <Sheet $z={4} $w={56}>DB 2</Sheet>
          <Sheet $z={3} $w={56}>DB 3</Sheet>
          <Sheet $z={2} $w={56}>DB 4</Sheet>
          <Sheet $z={1} $w={56} $pl={10}>本地</Sheet>
        </Sheets>
        <SheetSep />
        <HScroll><Chev dir="l" /><Thumb /><Chev dir="r" /></HScroll>
        <BarFill $w={23} />
        <BarSplit />
        <Nav w={75} />
        <Sheets $w={172}>
          <Sheet $z={3} $on $w={55} $pl={10}>記錄</Sheet>
          <Sheet $z={2} $w={55} $pl={11}>參照</Sheet>
          <Sheet $z={1} $w={85} $pl={12}>尋找結果</Sheet>
        </Sheets>
      </BottomBar>
      <Status />

      <Win>
        <WinTitle>
          <WinIc />
          <WinName>Project Name -</WinName>
          <WinBtn><svg width="12" height="2" viewBox="0 0 12 2"><path d="M0 1h12" stroke="#000" /></svg></WinBtn>
          <WinBtn><svg width="12" height="12" viewBox="0 0 12 12"><rect x=".5" y=".5" width="11" height="11" fill="none" stroke="#ccc" /></svg></WinBtn>
          <WinBtn><XIc s={13} c="#000" w={1} /></WinBtn>
        </WinTitle>
        <WinBand><Names>{NAMES}</Names></WinBand>
        <WinBody>
          <WinSide><ExitBtn>exit</ExitBtn></WinSide>
          <Canvas>
            <CanvasBtn $x={121} $y={91} $focus>ON</CanvasBtn>
            <CanvasBtn $x={121} $y={211}>OFF</CanvasBtn>
            <Lamp $x={421} $y={90} $c="#ff1a1a" />
            <Lamp $x={420} $y={210} $c="#00b050" />
          </Canvas>
        </WinBody>
      </Win>
    </Page>
  );
}
